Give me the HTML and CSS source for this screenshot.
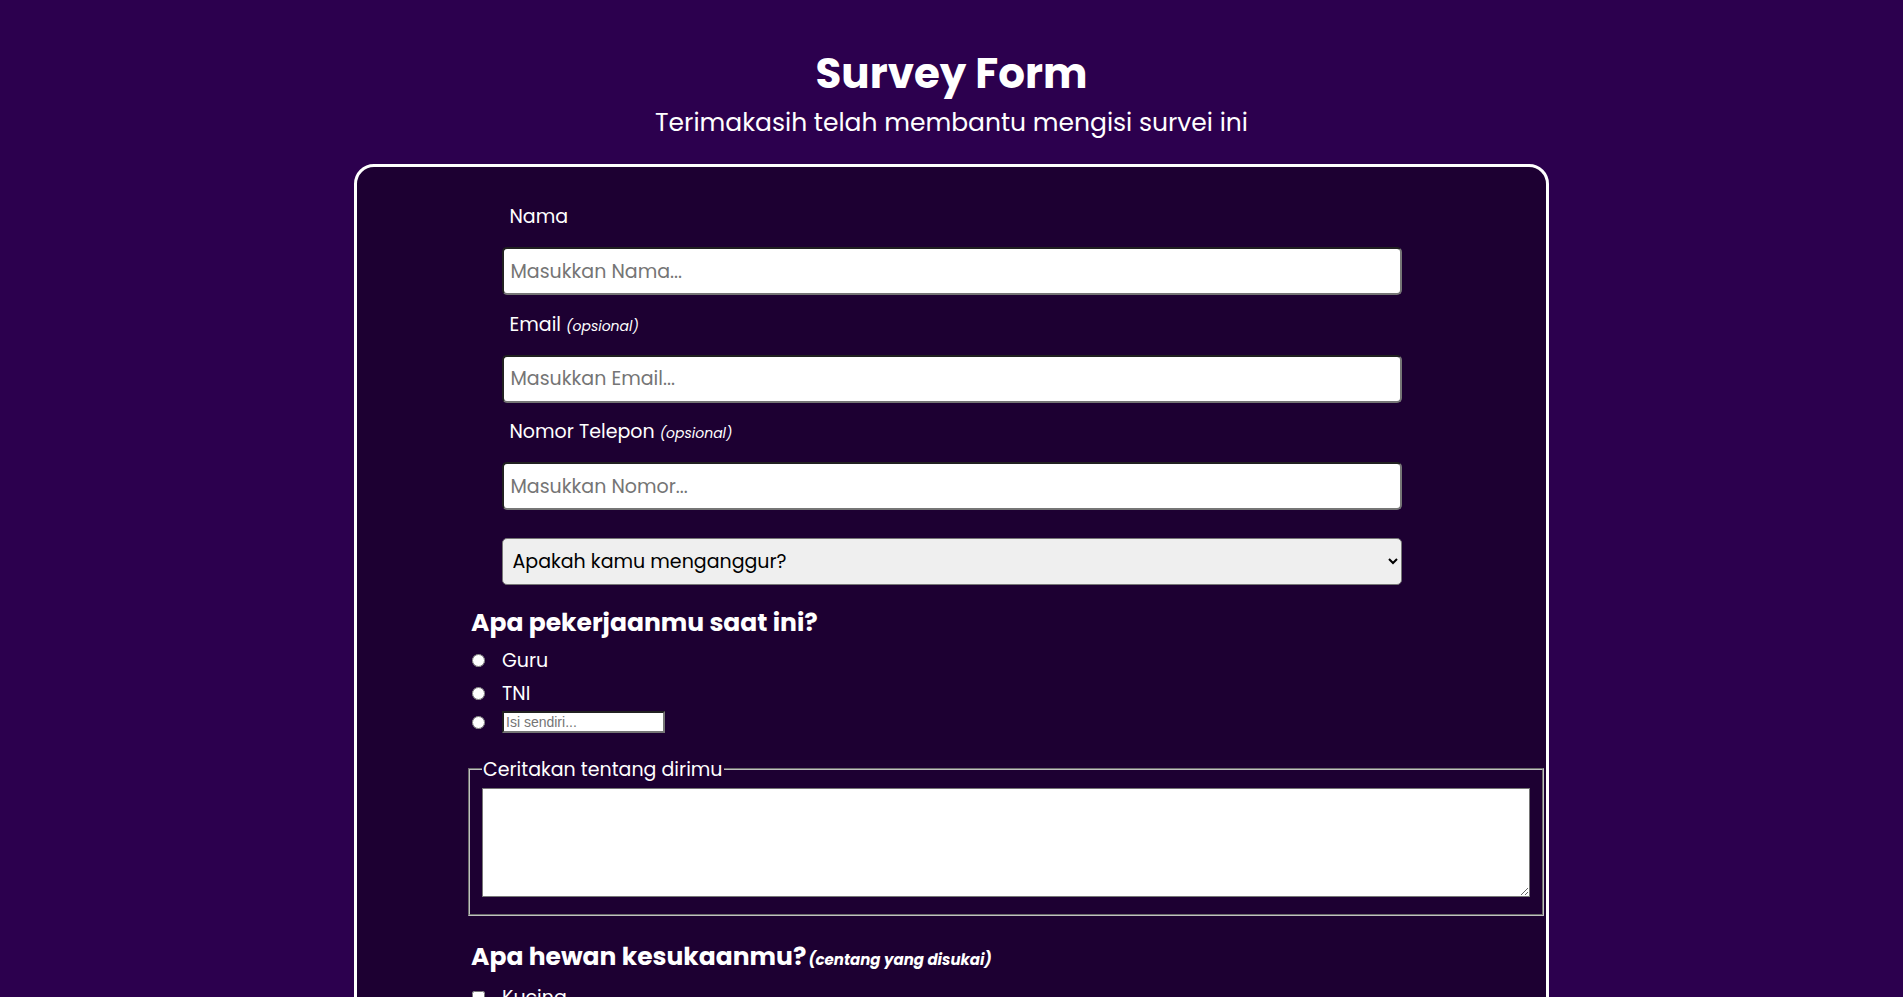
FILE: index.html
```html
<!DOCTYPE html>
<html lang="id">
<head>
<meta charset="utf-8">
<title>Survey Form</title>
<link rel="stylesheet" href="styles.css">
</head>
<body>
<header class="header">
  <h1 class="title">Survey Form</h1>
  <p class="subtitle">Terimakasih telah membantu mengisi survei ini</p>
</header>
<form class="card">
  <div class="fields">
    <div class="field">
      <label class="field-label" for="nama">Nama</label>
      <input class="text-input" id="nama" type="text" placeholder="Masukkan Nama...">
    </div>
    <div class="field">
      <label class="field-label" for="email">Email <em class="opt">(opsional)</em></label>
      <input class="text-input" id="email" type="email" placeholder="Masukkan Email...">
    </div>
    <div class="field">
      <label class="field-label" for="nomor">Nomor Telepon <em class="opt">(opsional)</em></label>
      <input class="text-input" id="nomor" type="tel" placeholder="Masukkan Nomor...">
    </div>
    <select class="select">
      <option>Apakah kamu menganggur?</option>
      <option>Ya</option>
      <option>Tidak</option>
    </select>
  </div>
  <div class="questions">
    <h2 class="question">Apa pekerjaanmu saat ini?</h2>
    <div class="choices">
      <label class="choice"><input type="radio" name="kerja" class="mark"><span>Guru</span></label>
      <label class="choice"><input type="radio" name="kerja" class="mark"><span>TNI</span></label>
      <label class="choice choice-other"><input type="radio" name="kerja" class="mark"><input type="text" class="other" placeholder="Isi sendiri..."></label>
    </div>
    <fieldset class="about">
      <legend class="about-legend">Ceritakan tentang dirimu</legend>
      <textarea class="about-text"></textarea>
    </fieldset>
    <h2 class="question question-2">Apa hewan kesukaanmu?<em class="hint">(centang yang disukai)</em></h2>
    <div class="choices">
      <label class="choice"><input type="checkbox" class="mark"><span>Kucing</span></label>
      <label class="choice"><input type="checkbox" class="mark"><span>Anjing</span></label>
      <label class="choice"><input type="checkbox" class="mark"><span>Burung</span></label>
      <label class="choice"><input type="checkbox" class="mark"><span>Ikan</span></label>
    </div>
    <button class="submit" type="submit">Kirim</button>
  </div>
</form>
</body>
</html>
```
FILE: styles.css
```css
html, body {
  margin: 0;
  padding: 0;
}
body {
  background: #2c004e;
  color: #ffffff;
  font-family: "Poppins", "Inter", "Open Sans", sans-serif;
  padding-bottom: 60px;
}
.header {
  text-align: center;
  padding-top: 50px;
}
.title {
  margin: 0;
  font-size: 42px;
  line-height: 48px;
  font-weight: 700;
}
.subtitle {
  margin: 10px 0 0;
  font-size: 25px;
  line-height: 30px;
  font-weight: 400;
}
.card {
  box-sizing: border-box;
  width: 1195px;
  margin: 26px auto 0;
  background: #1d0032;
  border: 3px solid #ffffff;
  border-radius: 20px;
  padding: 36px 0 40px;
}
.fields {
  width: 900px;
  margin: 0 auto;
  display: flex;
  flex-direction: column;
}
.field {
  display: flex;
  flex-direction: column;
  gap: 16px;
  margin-bottom: 15.5px;
}
.field-label {
  font-size: 19px;
  line-height: 28px;
  padding-left: 8px;
}
.opt {
  font-size: 14px;
  line-height: 1;
}
.text-input {
  box-sizing: border-box;
  height: 48px;
  width: 100%;
  border: 2px inset #767676;
  border-radius: 5px;
  padding: 0 7px;
  font-family: "Poppins", "Inter", "Open Sans", sans-serif;
  font-size: 19px;
  color: #222;
  background: #fff;
}
.text-input::placeholder {
  color: #757575;
}
.select {
  box-sizing: border-box;
  margin-top: 12px;
  height: 47px;
  width: 100%;
  border: 1px solid #767676;
  border-radius: 5px;
  background: #efefef;
  color: #000;
  padding: 0 6px;
  font-family: "Poppins", "Inter", "Open Sans", sans-serif;
  font-size: 19px;
}
.questions {
  padding-left: 109px;
  margin-top: 22px;
}
.question {
  margin: 0;
  padding-left: 5px;
  font-size: 25px;
  line-height: 32px;
  font-weight: 700;
}
.choices {
  display: flex;
  flex-direction: column;
  margin-top: 5px;
}
.choice {
  display: flex;
  align-items: center;
  height: 33px;
  font-size: 19px;
}
.choice-other {
  height: 25px;
}
.mark {
  margin: 0 17px 0 6px;
  width: 13px;
  height: 13px;
}
.other {
  font-family: "Liberation Sans", Arial, sans-serif;
  font-size: 14px;
  padding: 1px 2px;
  border: 2px inset #767676;
  width: 155px;
}
.about {
  margin: 21px 2px 0;
  border: 2px groove #c0c0c0;
  padding: 5.6px 12px 10px;
}
.about-legend {
  font-size: 19px;
  line-height: 27px;
  padding: 0 1px;
}
.about-text {
  box-sizing: border-box;
  width: 100%;
  height: 109px;
  border: 1px solid #767676;
  background: #fff;
}
.question-2 {
  margin-top: 25px;
}
.hint {
  font-size: 15px;
  font-weight: 700;
  margin-left: 2px;
}
.submit {
  margin-top: 20px;
  padding: 10px 24px;
  font-family: "Poppins", "Inter", "Open Sans", sans-serif;
  font-size: 18px;
  border-radius: 5px;
  border: none;
  background: #ffffff;
  color: #1d0032;
}
```
